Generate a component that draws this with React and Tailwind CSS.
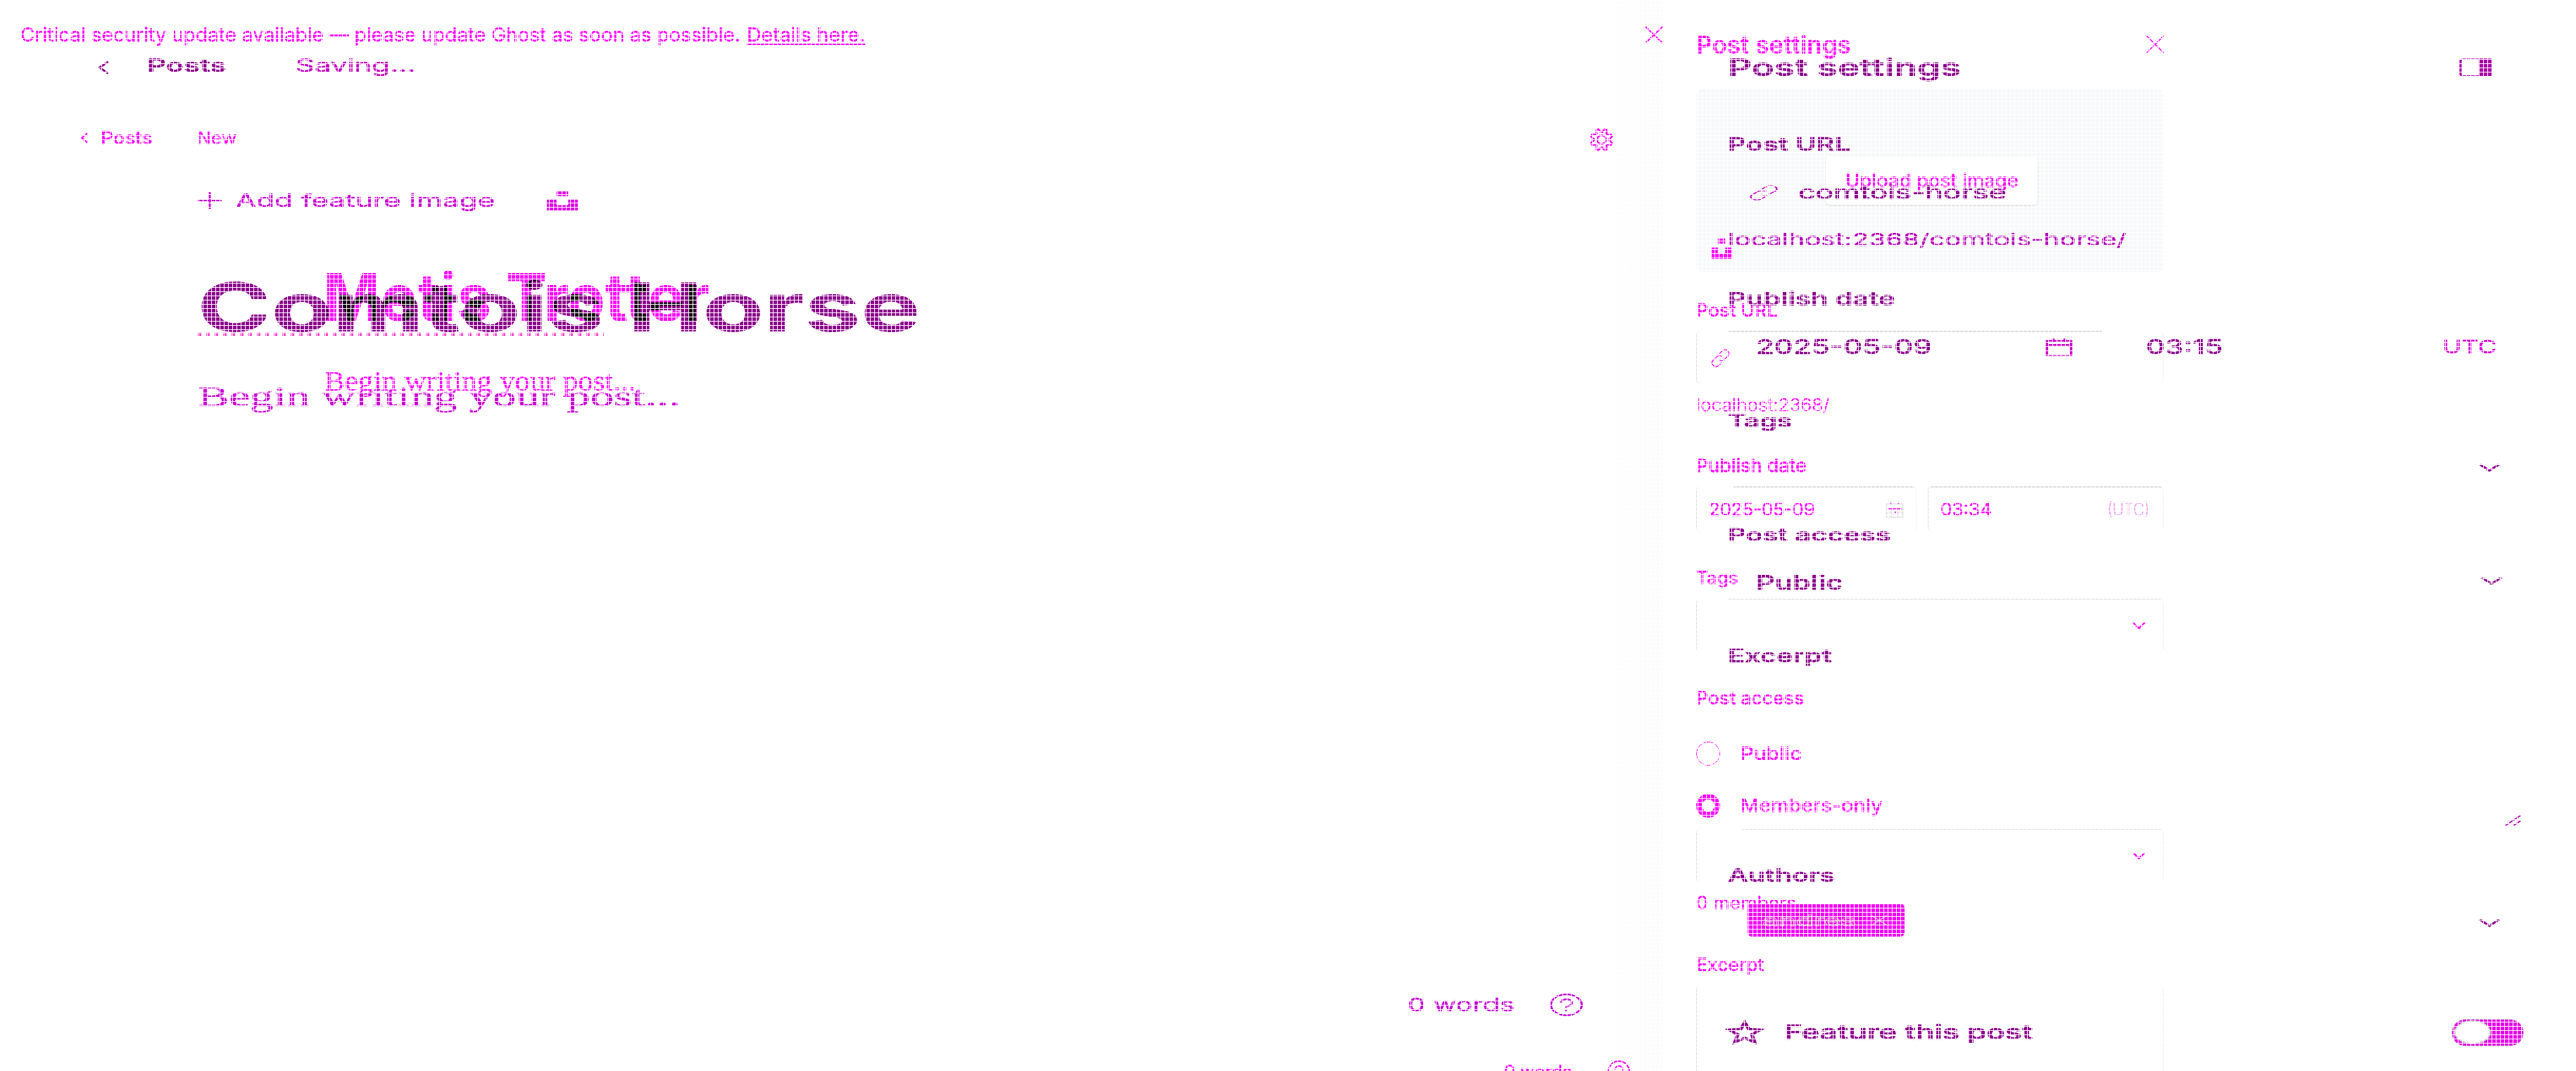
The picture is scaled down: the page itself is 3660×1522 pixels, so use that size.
import React, { useLayoutEffect, useRef } from "react";

// Text stretched horizontally to the width of its box.
function T({ className = "", inner = "", children }) {
  const box = useRef(null);
  const ink = useRef(null);
  useLayoutEffect(() => {
    const natural = ink.current.offsetWidth;
    ink.current.style.transform = `scaleX(${box.current.offsetWidth / natural})`;
  });
  return (
    <span ref={box} className={`block shrink-0 whitespace-nowrap leading-[40px] ${className}`}>
      <span ref={ink} className={`inline-block origin-left ${inner}`}>
        {children}
      </span>
    </span>
  );
}

const Row = ({ className = "", children }) => (
  <div className={`flex h-[40px] shrink-0 items-center ${className}`}>{children}</div>
);

function Icon({ className, view = "0 0 24 24", sw = 2, children }) {
  return (
    <svg className={`block shrink-0 overflow-visible ${className}`} viewBox={view} preserveAspectRatio="none" fill="none" stroke="currentColor" strokeWidth={sw}>
      {children}
    </svg>
  );
}
const Close = ({ className, sw = 1.6 }) => (
  <Icon className={className} sw={sw}><path d="M0 0 24 24M24 0 0 24" /></Icon>
);
const Chevron = ({ className, sw = 3 }) => (
  <Icon className={className} sw={sw}><path d="M1 2 12 21 23 2" /></Icon>
);
const Back = ({ className, sw = 4 }) => (
  <Icon className={className} sw={sw}><path d="M22 1 5 12 22 23" /></Icon>
);
const Unsplash = ({ className }) => (
  <Icon className={className} view="0 0 32 32" sw={0}>
    <path fill="currentColor" d="M10 0h12v8H10zM0 14h10v9h12v-9h10v18H0z" />
  </Icon>
);
const Link = ({ className, sw }) => (
  <Icon className={className} sw={sw}>
    <path d="M10 14a4.6 4.6 0 0 0 6.6 0l5-5a5 5 0 0 0-7-7l-4 4" />
    <path d="M14 10a4.6 4.6 0 0 0-6.6 0l-5 5a5 5 0 0 0 7 7l4-4" />
  </Icon>
);
const Help = ({ className, sw }) => (
  <Icon className={className} sw={sw}>
    <circle cx="12" cy="12" r="11.2" />
    <path d="M8 9.6a4 3.6 0 1 1 5.4 3.4q-1.4.6-1.4 2.4M12 17.3v1.6" />
  </Icon>
);
const Calendar = ({ className, sw }) => (
  <Icon className={className} sw={sw}><path d="M1.5 4h21v19h-21zM1.5 9.5h21M7 0v6M17 0v6" /></Icon>
);
const gear = Array.from({ length: 64 }, (_, i) => {
  const a = (i / 64) * Math.PI * 2;
  const r = 9.6 + 1.7 * Math.max(-1, Math.min(1, 1.7 * Math.cos(8 * a + Math.PI)));
  return `${(12 + r * Math.sin(a)).toFixed(2)},${(12 - r * Math.cos(a)).toFixed(2)}`;
}).join(" ");

function Box({ className = "", line = "", children }) {
  return (
    <div className={`shrink-0 overflow-hidden rounded-[6px] border-l border-r border-l-[#dedede] border-r-[#f0f0f0] ${className}`}>
      <div className={`bg-[#dedede] ${line}`} />
      {children}
    </div>
  );
}

function EarlierEditor() {
  return (
    <div className="absolute inset-0 flex text-[#ff00ff] [-webkit-text-stroke:0.4px_currentColor]">
      <main className="flex w-[2410px] shrink-0 flex-col pt-[29px]">
        <Row className="pl-[29px]">
          <T className="w-[1023px] text-[27.5px]">Critical security update available — please update Ghost as soon as possible.</T>
          <T className="ml-[9px] w-[168px] text-[27.5px]" inner="underline decoration-2 underline-offset-[3px] [text-decoration-skip-ink:none]">Details here.</T>
          <Close className="ml-[1109px] h-[23px] w-[24px]" sw={2} />
        </Row>
        <Row className="mt-[107px] pl-[114px]">
          <Back className="h-[14px] w-[11px]" />
          <T className="ml-[18px] w-[74px] text-[25.5px] font-medium">Posts</T>
          <T className="ml-[63px] w-[57px] text-[25.5px]">New</T>
          <Icon className="ml-[1922px] mt-[4px] h-[33px] w-[33px]" sw={1.8}>
            <polygon points={gear} />
            <circle cx="12" cy="12" r="4.6" />
          </Icon>
        </Row>
        <Row className="mt-[306px] pl-[461px]">
          <T className="w-[443px] font-['Liberation_Serif',serif] text-[39px]">Begin writing your post...</T>
        </Row>
        <Row className="mt-[941px] pl-[2137px]">
          <T className="w-[96px] text-[25.5px]">0 words</T>
          <Help className="ml-[51px] h-[32px] w-[32px]" sw={1.5} />
        </Row>
      </main>
      <aside className="flex w-[664px] shrink-0 flex-col pt-[43px]">
        <Row className="justify-between">
          <T className="w-[220px] pt-px text-[34px] font-semibold">Post settings</T>
          <Close className="h-[24px] w-[24px]" sw={1.7} />
        </Row>
        <div className="mt-[44px] flex h-[260px] shrink-0 flex-col rounded-[8px] bg-[#f7f8fa] pt-[95px]">
          <div className="ml-[184px] flex h-[69px] w-[301px] items-center justify-center rounded-[6px] bg-white shadow-[0_1px_3px_rgba(0,0,0,0.14)]">
            <T className="w-[246px] text-[27px] font-medium">Upload post image</T>
          </div>
          <Unsplash className="ml-[22px] mt-[48px] h-[29px] w-[28px]" />
        </div>
        <Row className="mt-[34px]"><T className="w-[116px] text-[25.5px] font-medium">Post URL</T></Row>
        <Box className="mt-[9px] h-[76px]" line="ml-[45px] mr-[66px] h-[2px] w-[530px]">
          <Link className="ml-[20px] mt-[24px] h-[26px] w-[27px]" sw={1.2} />
        </Box>
        <Row className="mt-[9px]"><T className="w-[189px] text-[24.5px] font-light">localhost:2368/</T></Row>
        <Row className="mt-[47px]"><T className="w-[157px] text-[26px] font-medium">Publish date</T></Row>
        <div className="mt-[9px] flex h-[64px] shrink-0 gap-[16px]">
          <Box className="w-[313px]" line="ml-[52px] h-[2px]">
            <div className="flex h-[62px] items-center pl-[17px]">
              <T className="w-[151px] text-[25px]">2025-05-09</T>
              <Icon className="ml-[100px] h-[24px] w-[26px] text-[#e4dce4]" sw={1.6}>
                <path d="M1.5 4h21v19h-21zM7 0v6M17 0v6M1.5 16h21M8 10v13M16 10v13" />
                <path d="M3 11h18M7 2v2M17 2v2M12 16h2" stroke="#ff00ff" />
              </Icon>
            </div>
          </Box>
          <Box className="w-[335px]" line="h-[2px]">
            <div className="flex h-[62px] items-center pl-[17px]">
              <T className="w-[73px] text-[25px]">03:34</T>
              <T className="ml-[164px] w-[60px] text-[25px] font-light text-[#eea6ee]">(UTC)</T>
            </div>
          </Box>
        </div>
        <Row className="mt-[46px]"><T className="w-[60px] text-[25.5px] font-medium">Tags</T></Row>
        <Box className="mt-[10px] h-[76px]" line="ml-[45px] h-px">
          <Chevron className="ml-[619px] mt-[32px] h-[10px] w-[18px]" sw={4} />
        </Box>
        <Row className="mt-[45px]"><T className="w-[153px] text-[25.5px] font-medium">Post access</T></Row>
        <Row className="mt-[39px]">
          <span className="size-[34px] rounded-full border border-[#ff00ff]" />
          <T className="ml-[29px] w-[87px] text-[25.5px] font-medium">Public</T>
        </Row>
        <Row className="mt-[34px]">
          <span className="size-[34px] rounded-full border-8 border-[#ff00ff]" />
          <T className="ml-[29px] w-[202px] text-[26px] font-medium">Members-only</T>
        </Row>
        <Box className="mt-[13px] h-[76px]" line="ml-[63px] h-px">
          <Chevron className="ml-[619px] mt-[32px] h-[10px] w-[18px]" sw={4} />
        </Box>
        <Row className="mt-[9px]"><T className="w-[142px] text-[25.5px]">0 members</T></Row>
        <Row className="mt-[48px]"><T className="w-[96px] text-[25.5px] font-medium">Excerpt</T></Row>
        <Box className="mt-[9px] h-[140px]" />
      </aside>
    </div>
  );
}

function LaterEditor() {
  return (
    <div className="absolute inset-0 flex text-[#8b008b] [-webkit-text-stroke:0.5px_currentColor]">
      <main className="flex w-[2455px] shrink-0 flex-col pt-[73px]">
        <Row className="pl-[138px]">
          <Back className="mt-[6px] h-[18px] w-[17px]" sw={4} />
          <T className="ml-[54px] w-[113px] text-[25.5px] font-semibold">Posts</T>
          <T className="ml-[98px] w-[171px] text-[25.5px] text-[#c000c0]">Saving...</T>
        </Row>
        <Row className="mt-[152px] pl-[281px] text-[#c800d2]">
          <Icon className="h-[24px] w-[34px]"><path d="M12 0v24M0 12h24" /></Icon>
          <T className="ml-[20px] w-[368px] text-[25.5px]">Add feature image</T>
          <Unsplash className="ml-[74px] h-[27px] w-[44px] text-[#e000e6]" />
        </Row>
        <div className="ml-[281px] mt-[168px] h-[4px] w-[577px] shrink-0 bg-[repeating-linear-gradient(90deg,#ff00b4_0_5px,transparent_5px_12px)]" />
        <Row className="mt-[66px] pl-[281px]">
          <T className="w-[685px] font-['Liberation_Serif',serif] text-[41px] text-[#c800d2]">Begin writing your post...</T>
        </Row>
        <Row className="mt-[825px] pl-[2000px] text-[#c400d4]">
          <T className="w-[152px] text-[26px]">0 words</T>
          <Help className="ml-[50px] h-[32px] w-[47px]" sw={1.6} />
        </Row>
      </main>
      <aside className="flex w-[1205px] shrink-0 flex-col pt-[76px]">
        <Row>
          <T className="w-[331px] text-[34px] font-semibold">Post settings</T>
          <Icon className="ml-[708px] h-[26px] w-[47px] text-[#a800a8]" sw={1.6}>
            <rect x="1" y="1" width="22" height="22" rx="2" />
            <path d="M15 1h8v22h-8z" fill="currentColor" />
          </Icon>
        </Row>
        <Row className="mt-[69px]"><T className="w-[174px] text-[25.5px] font-semibold">Post URL</T></Row>
        <Row className="mt-[29px] pl-[30px]">
          <Link className="h-[22px] w-[42px] text-[#c000c0]" sw={1.3} />
          <T className="ml-[28px] w-[295px] text-[27px] font-medium">comtois-horse</T>
        </Row>
        <Row className="mt-[26px]"><T className="w-[566px] text-[24.5px] text-[#b400b8]">localhost:2368/comtois-horse/</T></Row>
        <Row className="mt-[45px]"><T className="w-[238px] text-[26px] font-semibold">Publish date</T></Row>
        <Row className="mt-[28px] pl-[40px]">
          <T className="w-[250px] text-[28.5px] font-medium">2025-05-09</T>
          <Calendar className="ml-[161px] h-[26px] w-[39px] text-[#c800c8]" sw={2.2} />
          <T className="ml-[104px] w-[109px] text-[28.5px] font-medium">03:15</T>
          <T className="ml-[312px] w-[77px] text-[25px] text-[#d800d8]">UTC</T>
        </Row>
        <Row className="mt-[65px]"><T className="w-[92px] text-[25.5px] font-semibold">Tags</T></Row>
        <Row className="mt-[26px] pl-[1067px]"><Chevron className="h-[11px] w-[30px]" sw={4} /></Row>
        <Row className="mt-[56px]"><T className="w-[232px] text-[25.5px] font-semibold">Post access</T></Row>
        <Row className="mt-[28px] pl-[40px]">
          <T className="w-[123px] text-[28.5px] font-semibold">Public</T>
          <Chevron className="-mt-[6px] ml-[907px] h-[11px] w-[30px]" sw={4} />
        </Row>
        <Row className="mt-[64px]"><T className="w-[148px] text-[25.5px] font-semibold">Excerpt</T></Row>
        <Row className="mt-[194px] pl-[1105px]">
          <Icon className="h-[14px] w-[21px] text-[#b400b4]" sw={2.8}><path d="M0 24 24 0M13 24 24 13" /></Icon>
        </Row>
        <Row className="mt-[38px]"><T className="w-[153px] text-[25.5px] font-semibold">Authors</T></Row>
        <div className="mt-[20px] flex h-[47px] shrink-0 items-center pl-[28px]">
          <div className="flex h-full w-[223px] items-center rounded-[6px] bg-[#f400f8] text-[#f200bc]">
            <T className="ml-[21px] w-[133px] text-[22px] [-webkit-text-stroke:0.8px_#dcb4dc]">andres</T>
            <Close className="ml-[22px] h-[14px] w-[22px] text-[#e8a0d8]" sw={2.5} />
          </div>
          <Chevron className="ml-[816px] mt-[7px] h-[11px] w-[30px]" sw={4} />
        </div>
        <Row className="mt-[116px]">
          <Icon className="h-[32px] w-[48px]" sw={2.6}>
            <path d="m12 1.5 3 7.2 8 .6-6 5 2 8.2-7-4.4-7 4.4 2-8.2-6-5 8-.6z" />
          </Icon>
          <T className="ml-[32px] w-[353px] text-[28px] font-semibold">Feature this post</T>
          <span className="ml-[595px] flex h-[39px] w-[103px] items-center rounded-full border border-[#d0d0d0] bg-[#e600e8] pl-[3px]">
            <span className="h-[34px] w-[52px] rounded-[50%] border-2 border-[#cccccc] bg-white" />
          </span>
        </Row>
      </aside>
    </div>
  );
}

// Both post titles share one blend group: strokes that cross turn near black.
function Titles() {
  return (
    <div className="absolute inset-0 isolate grid grid-cols-1 grid-rows-1 items-start bg-white [filter:url(#crossing)]">
      <svg className="absolute size-0">
        <filter id="crossing" colorInterpolationFilters="sRGB" x="0" y="0" width="1" height="1">
          <feComponentTransfer>
            <feFuncR type="table" tableValues="0.08 0.08 0.08 0.08 0.08 0.545 0.545 0.7 1 1 1" />
            <feFuncB type="table" tableValues="0.08 0.08 0.08 0.08 0.08 0.545 0.545 0.7 1 1 1" />
          </feComponentTransfer>
        </filter>
      </svg>
      <div className="col-start-1 row-start-1 pl-[459px] pt-[402px] text-[#cc00cc]">
        <T className="w-[549px] text-[93px] font-bold">Metis Trotter</T>
      </div>
      <div className="col-start-1 row-start-1 pl-[280px] pt-[416px] text-[#800080] mix-blend-multiply">
        <T className="w-[1028px] text-[96px] font-bold">Comtois Horse</T>
      </div>
    </div>
  );
}

export default function App() {
  return (
    <div className="relative h-[1522px] w-[3660px] overflow-hidden bg-[#fefefe] font-['Inter',sans-serif]">
      <Titles />
      <div className="absolute inset-y-0 left-[2295px] w-[68px] bg-linear-to-r from-[#fefefe] to-[#fcfcfc]" />
      <EarlierEditor />
      <LaterEditor />
      <div className="pointer-events-none absolute inset-0 bg-[repeating-linear-gradient(90deg,#fff_0_1px,transparent_1px_6px),repeating-linear-gradient(0deg,transparent_0_5px,#fff_5px_6px)] bg-[length:6px_6px]" />
    </div>
  );
}
